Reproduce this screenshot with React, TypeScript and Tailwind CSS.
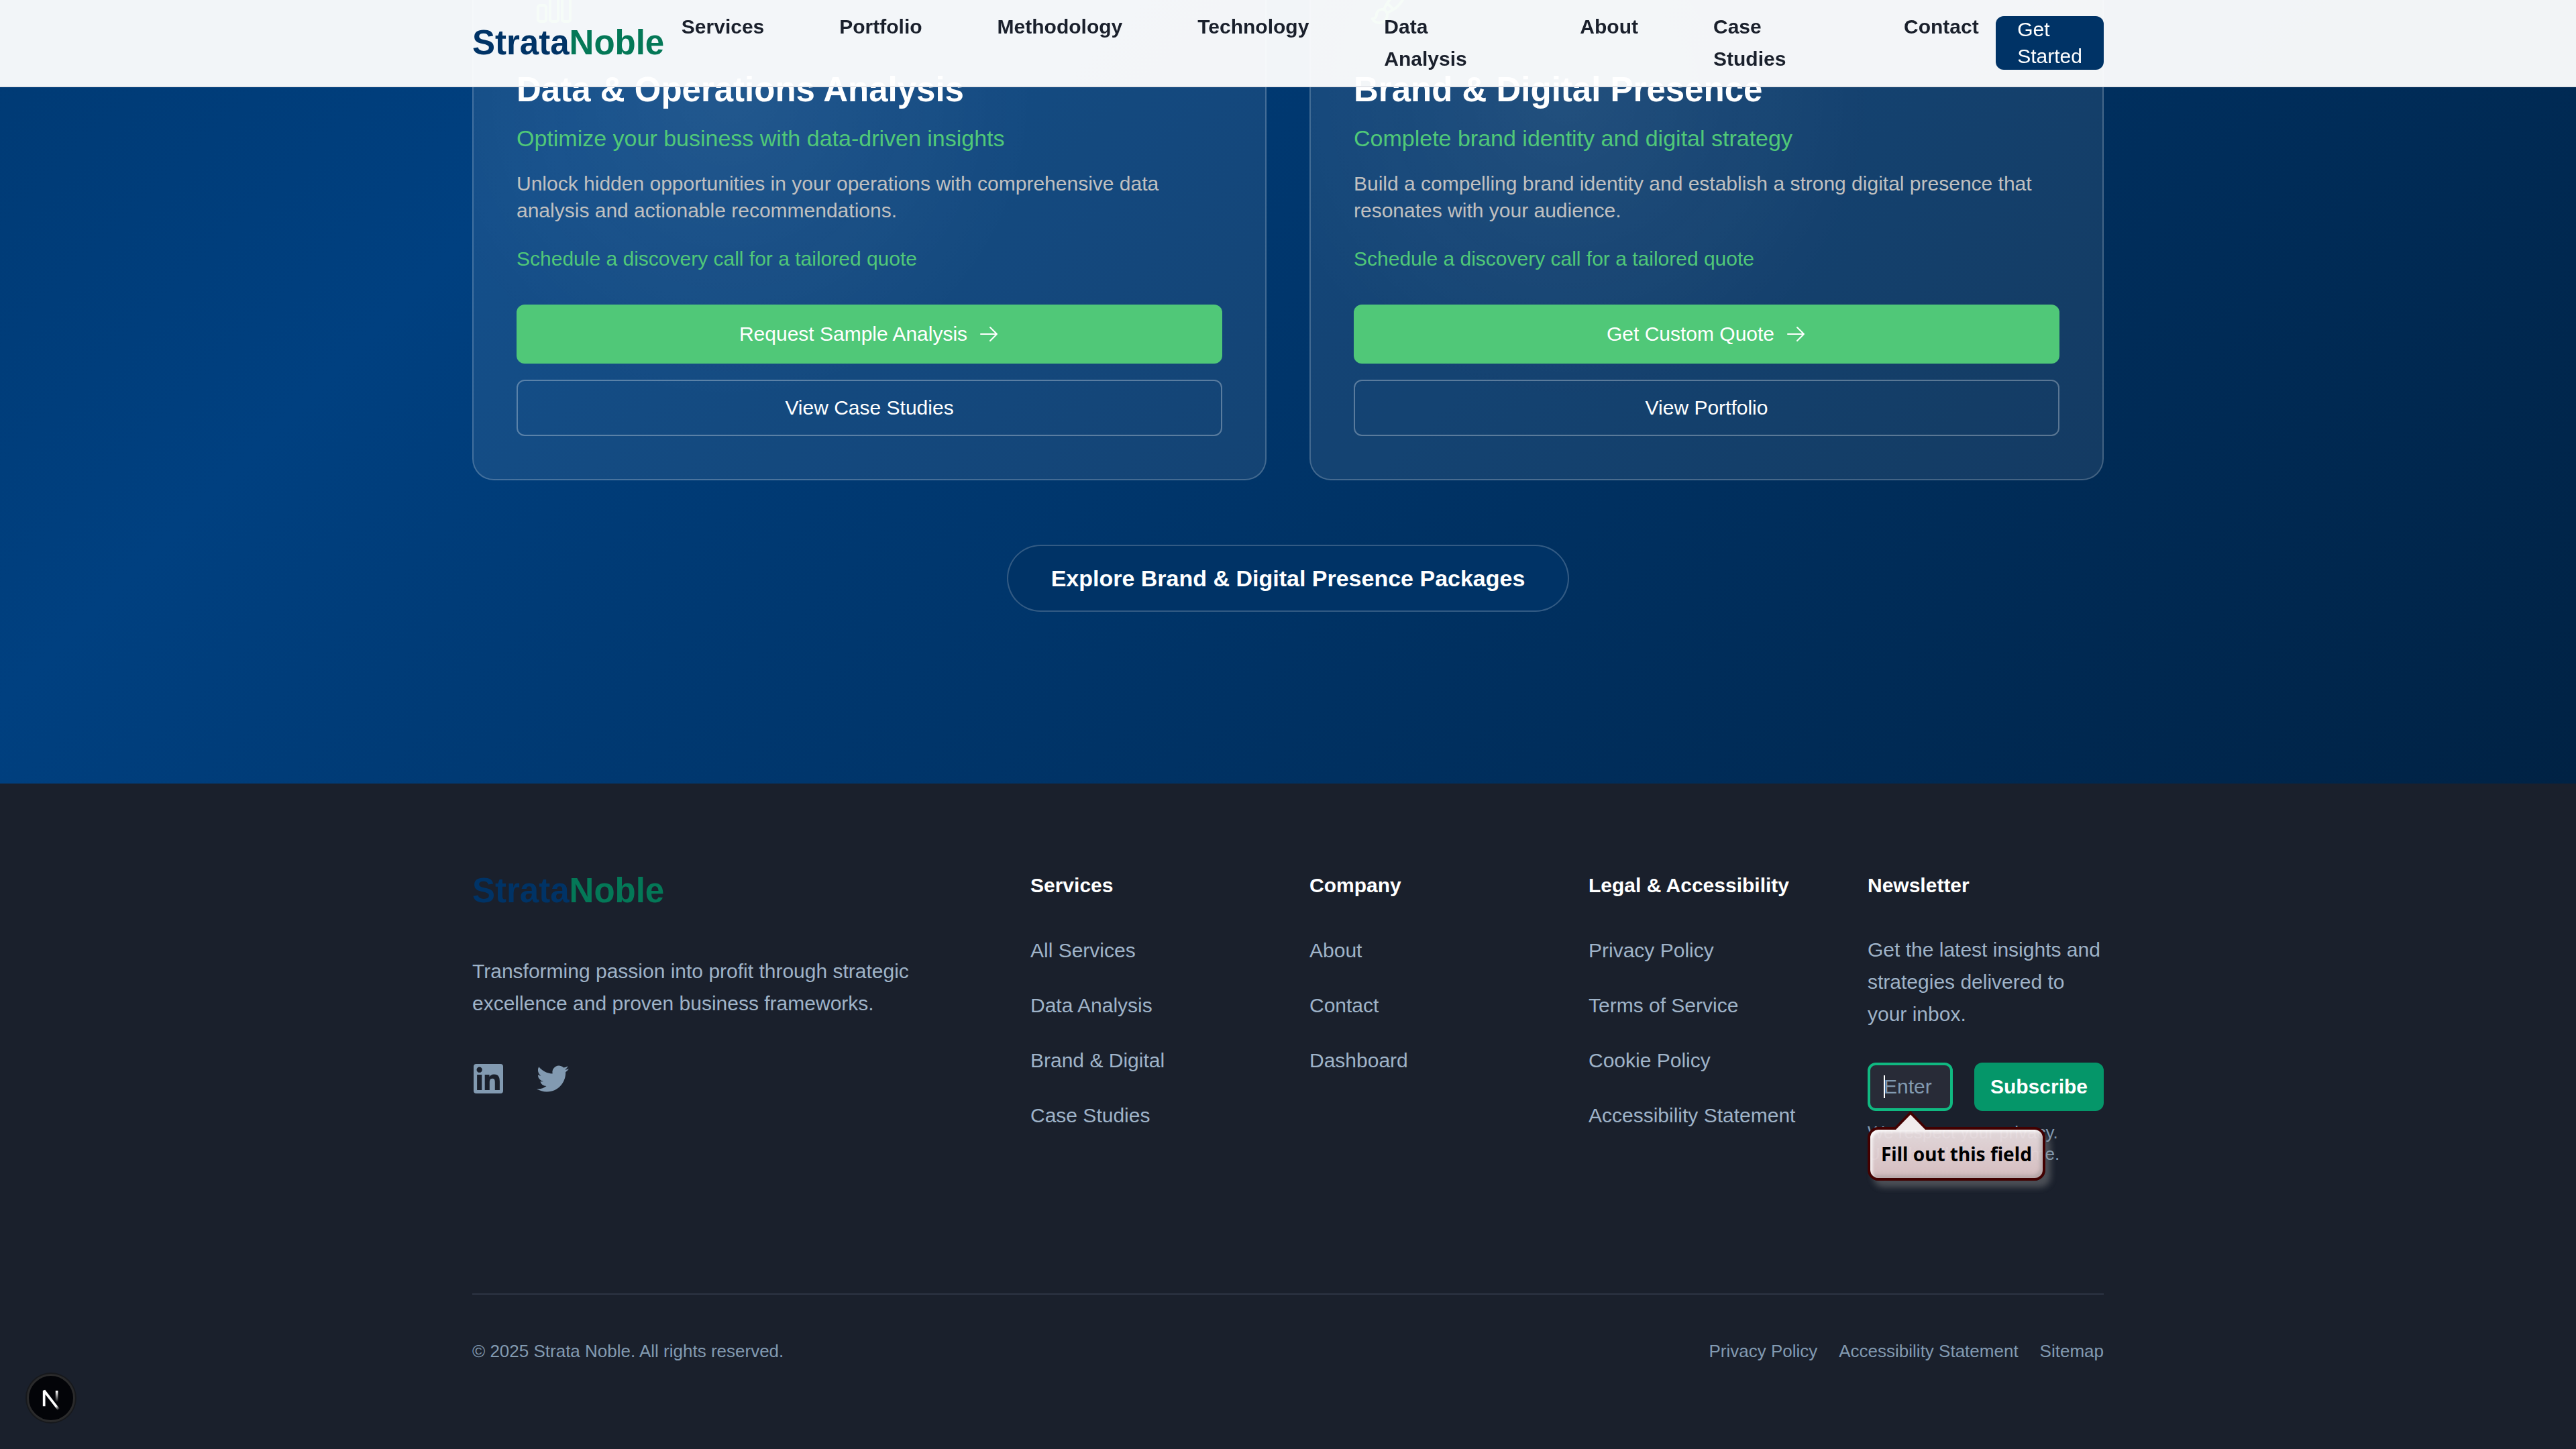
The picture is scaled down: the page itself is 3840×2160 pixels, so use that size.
import React from "react";
import { HiOutlineArrowRight, HiOutlineChartBar, HiOutlinePaintBrush } from "react-icons/hi2";

const NAV = [
  { label: "Services" },
  { label: "Portfolio" },
  { label: "Methodology" },
  { label: "Technology" },
  { label: "Data Analysis", width: "w-[180px]" },
  { label: "About" },
  { label: "Case Studies", width: "w-[172px]" },
  { label: "Contact" },
];

const CARDS = [
  {
    icon: HiOutlineChartBar,
    title: "Data & Operations Analysis",
    subtitle: "Optimize your business with data-driven insights",
    text: "Unlock hidden opportunities in your operations with comprehensive data analysis and actionable recommendations.",
    primary: "Request Sample Analysis",
    secondary: "View Case Studies",
  },
  {
    icon: HiOutlinePaintBrush,
    title: "Brand & Digital Presence",
    subtitle: "Complete brand identity and digital strategy",
    text: "Build a compelling brand identity and establish a strong digital presence that resonates with your audience.",
    primary: "Get Custom Quote",
    secondary: "View Portfolio",
  },
];

const COLUMNS = [
  { title: "Services", links: ["All Services", "Data Analysis", "Brand & Digital", "Case Studies"] },
  { title: "Company", links: ["About", "Contact", "Dashboard"] },
  {
    title: "Legal & Accessibility",
    links: ["Privacy Policy", "Terms of Service", "Cookie Policy", "Accessibility Statement"],
  },
];

function Logo() {
  return (
    <a href="#" className="shrink-0 text-[51px] leading-[64px] font-bold text-[#003366]">
      Strata<span className="text-[#047857]">Noble</span>
    </a>
  );
}

function Header() {
  return (
    <header className="fixed inset-x-0 top-0 z-20 border-b-2 border-[#e5e7eb] bg-white/95">
      <div className="mx-auto flex h-32 max-w-[2560px] items-center justify-between gap-6 px-16">
        <Logo />
        <nav className="flex items-start gap-28">
          {NAV.map((item) => (
            <a
              key={item.label}
              href="#"
              className={`text-[30px] leading-[48px] font-bold text-[#1a202c] ${item.width ?? ""}`}
            >
              {item.label}
            </a>
          ))}
        </nav>
        <button className="box-content w-min shrink-0 rounded-xl bg-[#003366] px-8 text-left text-[30px] leading-10 text-white">
          Get Started
        </button>
      </div>
    </header>
  );
}

function ServiceCard({ card }: { card: (typeof CARDS)[number] }) {
  const Icon = card.icon;
  return (
    <article className="flex flex-col rounded-b-[32px] border-2 border-t-0 border-white/20 bg-white/[0.08] bg-[radial-gradient(circle_at_380px_140px,rgba(255,255,255,0.06),transparent_460px)] px-16 pb-16">
      <Icon className="-mt-6 ml-6 size-16 text-[#50c878]" />
      <h2 className="mt-16 text-[51px] leading-[60px] font-bold text-white">{card.title}</h2>
      <p className="mt-4 text-[34px] leading-[52px] text-[#50c878]">{card.subtitle}</p>
      <p className="mt-[22px] text-[30px] leading-10 text-[#c0c0c0]">{card.text}</p>
      <p className="mt-8 text-[30px] leading-10 text-[#50c878]">Schedule a discovery call for a tailored quote</p>
      <button className="mt-12 flex items-center justify-center gap-4 rounded-xl bg-[#50c878] py-6 text-[30px] leading-10 text-white">
        {card.primary}
        <HiOutlineArrowRight className="size-8" />
      </button>
      <button className="mt-6 rounded-xl border-2 border-white/30 py-5 text-[30px] leading-10 text-white">
        {card.secondary}
      </button>
    </article>
  );
}

function Tooltip() {
  return (
    <div role="alert" className="absolute top-[72px] left-0 z-10 pt-6">
      <div className="rounded-2xl border-4 border-[#420000] bg-linear-to-b from-[#ebe1e3]/95 to-[#dfc5c7]/95 px-4 py-4 text-[28px] leading-10 font-bold whitespace-nowrap text-black shadow-[inset_3px_3px_4px_rgba(255,255,255,0.9),inset_-4px_-4px_5px_rgba(120,120,120,0.35),8px_10px_10px_rgba(150,150,150,0.4)] [font-family:'Noto_Sans',sans-serif]">
        Fill out this field
      </div>
      <svg viewBox="0 0 52 30" className="absolute top-0 left-[38px] h-[30px] w-[52px]" aria-hidden="true">
        <path d="M0 27 L26 0 L52 27 L49 28 H3Z" fill="#420000" />
        <path d="M3 29 L26 5.500 L49 29Z" fill="#f1ebec" />
      </svg>
    </div>
  );
}

function Newsletter() {
  return (
    <section>
      <h3 className="mb-12 text-[30px] leading-[48px] font-bold text-white">Newsletter</h3>
      <p className="mb-12 text-[30px] leading-[48px] text-[#9fb3c8]">
        Get the latest insights and strategies delivered to your inbox.
      </p>
      <form className="relative flex gap-8" onSubmit={(e) => e.preventDefault()}>
        <div className="relative flex min-w-0 flex-1">
          <input
            type="email"
            required
            aria-label="Email address"
            placeholder="Enter"
            className="h-[72px] w-full rounded-xl border-4 border-[#10b981] bg-[#282b37] px-5 text-[30px] text-white outline-none placeholder:text-[#829ab1]"
          />
          <span className="absolute top-[19px] left-6 h-[34px] w-0.5 bg-white" />
        </div>
        <button className="rounded-xl bg-[#059669] px-6 text-[30px] leading-[48px] font-bold text-white">
          Subscribe
        </button>
        <Tooltip />
      </form>
      <p className="mt-4 text-[26px] leading-8 text-[#829ab1]">
        We respect your privacy. Unsubscribe at any time.
      </p>
    </section>
  );
}

function Footer() {
  return (
    <footer className="bg-[#1a202c] pt-32 pb-[124px]">
      <div className="mx-auto max-w-[2560px] px-16">
        <div className="grid grid-cols-6 gap-16">
          <div className="col-span-2 flex flex-col items-start">
            <Logo />
            <p className="mt-16 text-[30px] leading-[48px] text-[#9fb3c8]">
              Transforming passion into profit through strategic excellence and proven business frameworks.
            </p>
            <div className="mt-16 flex gap-12 text-[#829ab1]">
              <a href="#" aria-label="LinkedIn">
                <svg viewBox="0 0 24 24" fill="currentColor" className="size-12">
                  <path d="M20.447 20.452h-3.554v-5.569c0-1.328-.027-3.037-1.852-3.037-1.853 0-2.136 1.445-2.136 2.939v5.667H9.351V9h3.414v1.561h.046c.477-.9 1.637-1.85 3.37-1.85 3.601 0 4.267 2.37 4.267 5.455v6.286zM5.337 7.433a2.062 2.062 0 01-2.063-2.065 2.064 2.064 0 112.063 2.065zm1.782 13.019H3.555V9h3.564v11.452zM21 1H3a2 2 0 00-2 2v18a2 2 0 002 2h18a2 2 0 002-2V3a2 2 0 00-2-2z" />
                </svg>
              </a>
              <a href="#" aria-label="Twitter">
                <svg viewBox="0 0 24 24" fill="currentColor" className="size-12">
                  <path d="M23.953 4.57a10 10 0 01-2.825.775 4.958 4.958 0 002.163-2.723c-.951.555-2.005.959-3.127 1.184a4.92 4.92 0 00-8.384 4.482C7.690 8.095 4.067 6.130 1.640 3.162a4.822 4.822 0 00-.666 2.475c0 1.710.870 3.213 2.188 4.096a4.904 4.904 0 01-2.228-.616v.060a4.923 4.923 0 003.946 4.827 4.996 4.996 0 01-2.212.085 4.936 4.936 0 004.604 3.417 9.867 9.867 0 01-6.102 2.105c-.390 0-.779-.023-1.170-.067a13.995 13.995 0 007.557 2.209c9.053 0 13.998-7.496 13.998-13.985 0-.210 0-.420-.015-.630A9.935 9.935 0 0024 4.590z" />
                </svg>
              </a>
            </div>
          </div>
          {COLUMNS.map((col) => (
            <section key={col.title}>
              <h3 className="mb-12 text-[30px] leading-[48px] font-bold text-white">{col.title}</h3>
              <ul className="flex flex-col gap-8">
                {col.links.map((link) => (
                  <li key={link} className="text-[30px] leading-[50px] text-[#9fb3c8]">
                    <a href="#">{link}</a>
                  </li>
                ))}
              </ul>
            </section>
          ))}
          <Newsletter />
        </div>
        <div className="mt-48 flex justify-between border-t-2 border-[#2d3443] pt-16 text-[26px] leading-10 text-[#829ab1]">
          <p>© 2025 Strata Noble. All rights reserved.</p>
          <nav className="flex gap-8">
            <a href="#">Privacy Policy</a>
            <a href="#">Accessibility Statement</a>
            <a href="#">Sitemap</a>
          </nav>
        </div>
      </div>
    </footer>
  );
}

function DevBadge() {
  return (
    <button
      aria-label="Open developer tools"
      className="fixed bottom-10 left-10 z-20 size-[72px] rounded-full border-[3px] border-[#2a2a2b] bg-[#030408] shadow-[0_0_0_2px_#17191d]"
    >
      <svg viewBox="0 0 33 33" className="size-[66px]" fill="none" aria-hidden="true">
        <defs>
          <linearGradient id="diag" x1="8" y1="9" x2="13.260" y2="15.200" gradientUnits="userSpaceOnUse">
            <stop stopColor="#fff" />
            <stop offset="0.600" stopColor="#fff" />
            <stop offset="1" stopColor="#fff" stopOpacity="0" />
          </linearGradient>
          <linearGradient id="stem" x1="11.800" y1="1.500" x2="11.800" y2="9.500" gradientUnits="userSpaceOnUse">
            <stop stopColor="#fff" />
            <stop offset="1" stopColor="#fff" stopOpacity="0" />
          </linearGradient>
        </defs>
        <g transform="translate(9 10)">
          <path d="M13.300 15.200 L2.340 1 V12.600" stroke="url(#diag)" strokeWidth="1.860" strokeLinejoin="bevel" />
          <rect x="10.900" y="1" width="1.860" height="9" fill="url(#stem)" />
        </g>
      </svg>
    </button>
  );
}

export default function App() {
  return (
    <div className="min-h-screen bg-[#1a202c] [font-family:'Liberation_Sans',Arial,sans-serif]">
      <Header />
      <main className="overflow-hidden bg-[linear-gradient(135deg,#003a74_0%,#004080_21%,#003366_55%,#002244_100%)] pb-64">
        <div className="mx-auto max-w-[2560px] px-16">
          <div className="grid grid-cols-2 gap-16">
            {CARDS.map((card) => (
              <ServiceCard key={card.title} card={card} />
            ))}
          </div>
          <div className="mt-24 flex justify-center">
            <button className="rounded-full border-2 border-white/20 bg-[#003366] px-16 py-6 text-[34px] leading-[48px] font-bold text-white">
              Explore Brand &amp; Digital Presence Packages
            </button>
          </div>
        </div>
      </main>
      <Footer />
      <DevBadge />
    </div>
  );
}
